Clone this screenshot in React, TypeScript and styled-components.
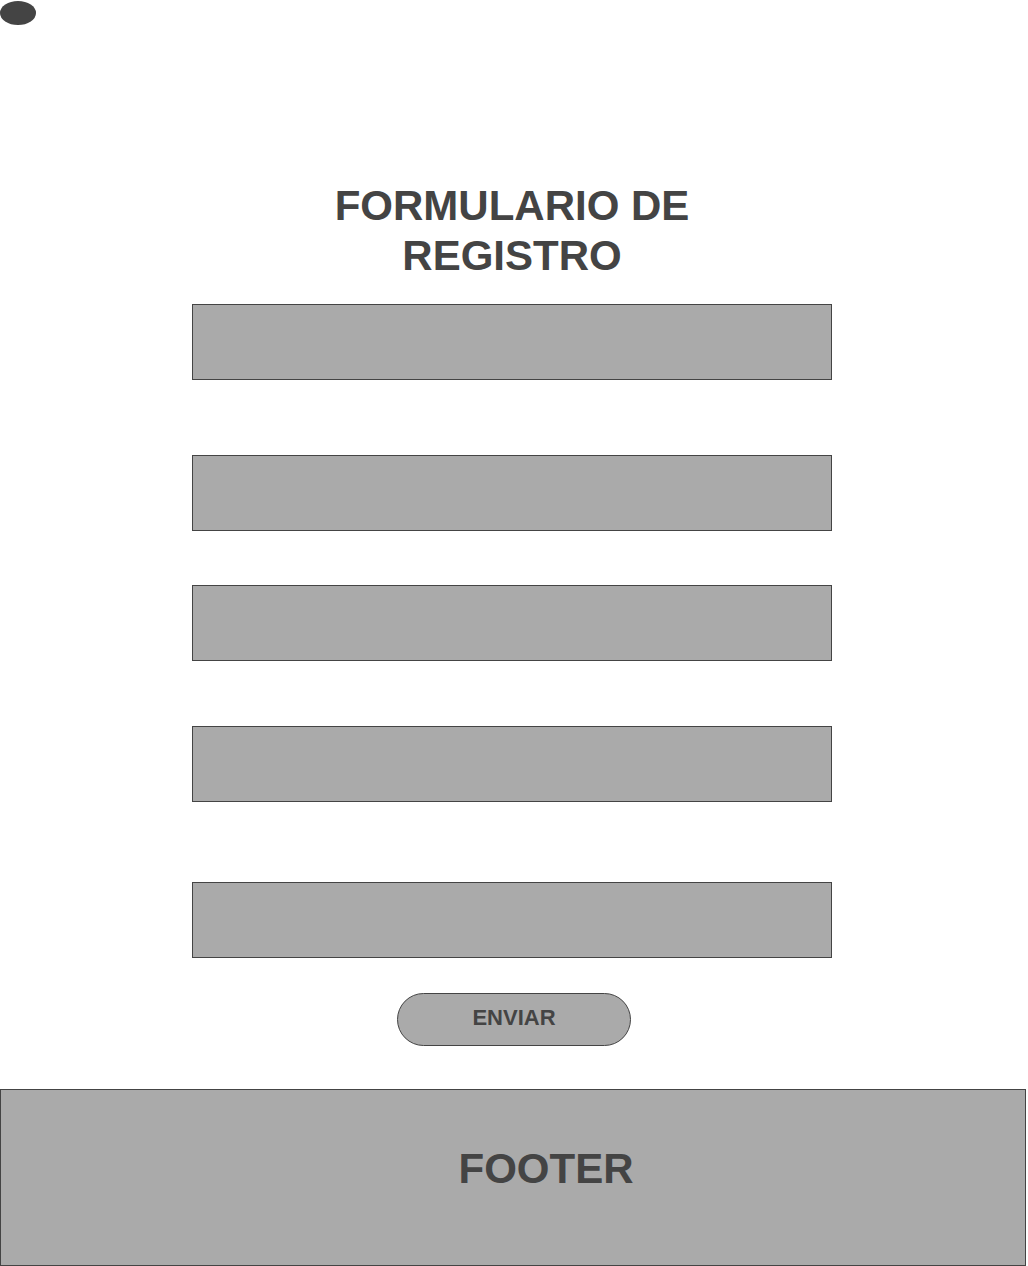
import React from "react";
import styled, { createGlobalStyle } from "styled-components";

const GlobalStyle = createGlobalStyle`
  html, body {
    margin: 0;
    padding: 0;
    background: #ffffff;
    font-family: "Liberation Sans", Arial, sans-serif;
  }
`;

const Page = styled.div`
  display: flex;
  flex-direction: column;
  width: 1028px;
  min-height: 1266px;
  box-sizing: border-box;
`;

const Logo = styled.div`
  width: 36px;
  height: 24px;
  margin-top: 1px;
  border-radius: 50%;
  background: #444444;
`;

const Main = styled.main`
  display: flex;
  flex-direction: column;
  align-items: center;
  width: 1024px;
`;

const Title = styled.h1`
  margin: 156px 0 0 0;
  width: 420px;
  text-align: center;
  font-size: 42px;
  line-height: 50px;
  font-weight: 700;
  color: #444444;
`;

const Field = styled.div<{ $gap: number }>`
  box-sizing: border-box;
  width: 640px;
  height: 76px;
  margin-top: ${(p) => p.$gap}px;
  background: #aaaaaa;
  border: 1px solid #444444;
`;

const Button = styled.button`
  box-sizing: border-box;
  width: 234px;
  height: 53px;
  margin-top: 35px;
  margin-left: 4px;
  padding: 0 0 4px 0;
  border-radius: 27px;
  border: 1px solid #444444;
  background: #aaaaaa;
  color: #444444;
  font-family: "Liberation Sans", Arial, sans-serif;
  font-size: 22px;
  font-weight: 700;
`;

const Footer = styled.footer`
  box-sizing: border-box;
  display: flex;
  align-items: center;
  justify-content: center;
  width: 1026px;
  height: 177px;
  margin-top: 43px;
  padding: 0 0 18px 66px;
  background: #aaaaaa;
  border: 1px solid #444444;
  color: #444444;
  font-size: 42px;
  font-weight: 700;
`;

const gaps = [23, 75, 54, 65, 80];

export default function App() {
  return (
    <>
      <GlobalStyle />
      <Page>
        <Logo />
        <Main>
          <Title>FORMULARIO DE REGISTRO</Title>
          {gaps.map((g, i) => (
            <Field key={i} $gap={g} />
          ))}
          <Button type="button">ENVIAR</Button>
        </Main>
        <Footer>FOOTER</Footer>
      </Page>
    </>
  );
}
